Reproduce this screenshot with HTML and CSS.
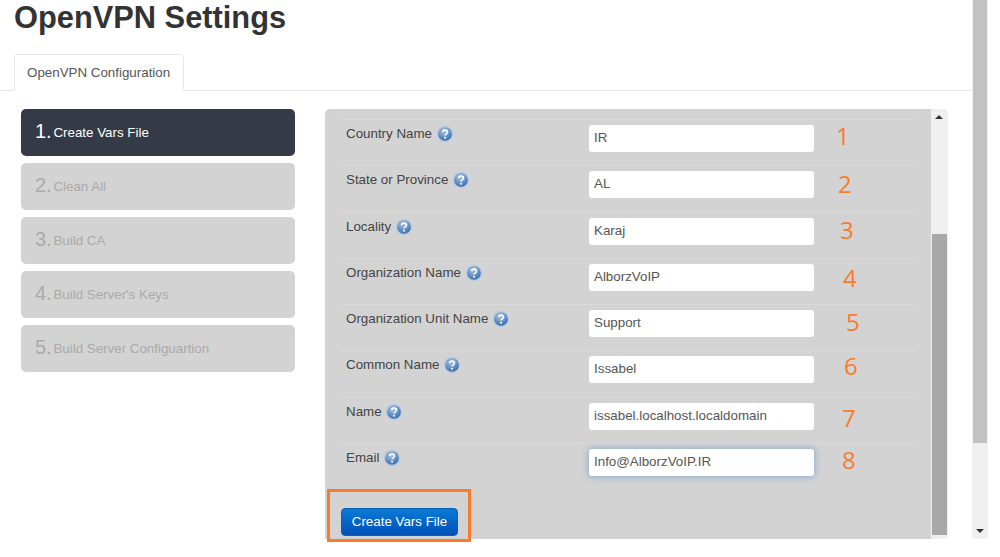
FILE: index.html
```html
<!DOCTYPE html>
<html lang="en">
<head>
    <title>OpenVPN Settings</title>
    <link rel="stylesheet" href="styles.css">
</head>
<body>
    <svg class="icon-defs" width="0" height="0">
        <defs>
            <radialGradient id="helpFill" cx="42%" cy="28%" r="80%">
                <stop offset="0" stop-color="#a9c4e2"/>
                <stop offset="0.55" stop-color="#6492c6"/>
                <stop offset="1" stop-color="#2a62a8"/>
            </radialGradient>
            <symbol id="help" viewBox="0 0 16 16">
                <circle cx="8" cy="8" r="8" fill="#b4c8dd"/>
                <circle cx="8" cy="8" r="6.8" fill="url(#helpFill)"/>
                <path d="M5.6 6.2c.2-1.4 1.2-2.1 2.5-2.1 1.4 0 2.4.8 2.4 2 0 1.8-2.4 1.8-2.4 3.5" fill="none" stroke="#fff" stroke-width="1.6"/>
                <circle cx="8.1" cy="11.8" r="1.05" fill="#fff"/>
            </symbol>
        </defs>
    </svg>

    <div class="page">
        <div class="main">
            <h1>OpenVPN Settings</h1>

            <div class="tabs">
                <div class="tab">OpenVPN Configuration</div>
            </div>

            <div class="content">
                <div class="steps">
                    <div class="step active"><span class="step-num">1.</span> Create Vars File</div>
                    <div class="step"><span class="step-num">2.</span> Clean All</div>
                    <div class="step"><span class="step-num">3.</span> Build CA</div>
                    <div class="step"><span class="step-num">4.</span> Build Server's Keys</div>
                    <div class="step"><span class="step-num">5.</span> Build Server Configuartion</div>
                </div>

                <div class="panel">
                    <div class="form">
                        <div class="row">
                            <div class="label">Country Name <svg class="help"><use href="#help"/></svg></div>
                            <div class="field">IR</div>
                            <span class="mark mark-1">1</span>
                        </div>
                        <div class="row">
                            <div class="label">State or Province <svg class="help"><use href="#help"/></svg></div>
                            <div class="field">AL</div>
                            <span class="mark mark-2">2</span>
                        </div>
                        <div class="row">
                            <div class="label">Locality <svg class="help"><use href="#help"/></svg></div>
                            <div class="field">Karaj</div>
                            <span class="mark mark-3">3</span>
                        </div>
                        <div class="row">
                            <div class="label">Organization Name <svg class="help"><use href="#help"/></svg></div>
                            <div class="field">AlborzVoIP</div>
                            <span class="mark mark-4">4</span>
                        </div>
                        <div class="row">
                            <div class="label">Organization Unit Name <svg class="help"><use href="#help"/></svg></div>
                            <div class="field">Support</div>
                            <span class="mark mark-5">5</span>
                        </div>
                        <div class="row">
                            <div class="label">Common Name <svg class="help"><use href="#help"/></svg></div>
                            <div class="field">Issabel</div>
                            <span class="mark mark-6">6</span>
                        </div>
                        <div class="row">
                            <div class="label">Name <svg class="help"><use href="#help"/></svg></div>
                            <div class="field">issabel.localhost.localdomain</div>
                            <span class="mark mark-7">7</span>
                        </div>
                        <div class="row">
                            <div class="label">Email <svg class="help"><use href="#help"/></svg></div>
                            <div class="field focused">Info@AlborzVoIP.IR</div>
                            <span class="mark mark-8">8</span>
                        </div>
                        <button class="create-btn">Create Vars File</button>
                        <div class="highlight"></div>
                    </div>
                    <div class="scrollbar inner-bar">
                        <span class="arrow-up"></span>
                        <div class="thumb inner-thumb"></div>
                    </div>
                </div>
            </div>
        </div>

        <div class="scrollbar page-bar">
            <div class="thumb page-thumb"></div>
            <span class="arrow-down"></span>
        </div>
    </div>
</body>
</html>
```

FILE: styles.css
```css
* {
    box-sizing: border-box;
}

html, body {
    min-height: 557px;
    background-color: white;
}

body {
    margin: 0;
    font-family: "Liberation Sans", Arial, sans-serif;
    font-size: 13.35px;
    color: #555;
}

.icon-defs {
    display: block;
    height: 0;
}

.page {
    display: flex;
    width: 988px;
    height: 539px;
}

.main {
    width: 972px;
    flex-shrink: 0;
}

h1 {
    margin: 0;
    padding: 0 0 0 14px;
    height: 54px;
    font-size: 30.8px;
    line-height: 36px;
    font-weight: bold;
    color: #333;
}

.tabs {
    height: 37px;
    padding-left: 14px;
    border-bottom: 1px solid #e8e8e8;
}

.tab {
    width: 170px;
    height: 37px;
    padding: 0 12px;
    line-height: 35px;
    white-space: nowrap;
    background: white;
    border: 1px solid #e8e8e8;
    border-bottom: 1px solid white;
    border-radius: 4px 4px 0 0;
}

.content {
    display: flex;
    padding: 18px 0 0 21px;
}

.steps {
    display: flex;
    flex-direction: column;
    gap: 7px;
    width: 274px;
    margin-right: 30px;
}

.step {
    height: 47px;
    padding-left: 14px;
    line-height: 45px;
    background-color: #d3d3d3;
    border-radius: 5px;
    color: #aaa;
}

.step.active {
    background-color: #343a46;
    color: white;
}

.step-num {
    margin-right: -2px;
    font-size: 20px;
    vertical-align: -1px;
}

.panel {
    display: flex;
    width: 623px;
    height: 430px;
}

.form {
    position: relative;
    width: 606px;
    padding: 10px 16px 0;
    background-color: #d3d3d3;
    border-radius: 5px 0 0 0;
}

.row {
    position: relative;
    display: flex;
    height: 46.3px;
    border-top: 1px solid #dadada;
}

.label {
    width: 248px;
    padding: 5px 0 0 5px;
    line-height: 18px;
    color: #444;
}

.help {
    width: 16px;
    height: 16px;
    margin-left: 1px;
    vertical-align: -4px;
}

.field {
    width: 225px;
    height: 27px;
    margin-top: 5px;
    padding-left: 5px;
    line-height: 26px;
    background: white;
    border-radius: 3px;
}

.field.focused {
    box-shadow: 0 0 6px 1px rgba(90, 150, 210, 0.6);
}

.mark {
    position: absolute;
    font-family: "Open Sans", sans-serif;
    font-size: 24px;
    line-height: 30px;
    color: #f97b2b;
}

.mark-1 { left: 495px; top: 1px; }
.mark-2 { left: 497px; top: 3px; }
.mark-3 { left: 499px; top: 2px; }
.mark-4 { left: 502px; top: 4px; }
.mark-5 { left: 505px; top: 2px; }
.mark-6 { left: 503px; top: 0; }
.mark-7 { left: 501px; top: 5px; }
.mark-8 { left: 501px; top: 1px; }

.create-btn {
    display: block;
    width: 117px;
    height: 28px;
    margin-top: 19px;
    padding: 0 0 2px;
    border: 1px solid #0a5fb4;
    border-radius: 4px;
    background: linear-gradient(#0a7ad6, #0050b8);
    color: white;
    font-family: inherit;
    font-size: 13.35px;
}

.highlight {
    position: absolute;
    left: 2px;
    top: 380px;
    width: 144px;
    height: 53px;
    border: 3px solid #f97b2b;
}

.scrollbar {
    position: relative;
    width: 17px;
    height: 100%;
    background-color: #f0f0f0;
}

.inner-bar {
    border-radius: 0 5px 0 0;
}

.thumb {
    position: absolute;
    left: 1px;
    width: 15px;
}

.inner-thumb {
    top: 125px;
    height: 301px;
    background-color: #a8a8a8;
}

.page-thumb {
    top: 0;
    width: 14px;
    height: 443px;
    background-color: #c2c2c2;
}

.arrow-up {
    position: absolute;
    left: 4px;
    top: 6px;
    border-left: 4px solid transparent;
    border-right: 4px solid transparent;
    border-bottom: 4px solid #333;
}

.page-bar {
    width: 16px;
}

.arrow-down {
    position: absolute;
    left: 4px;
    bottom: 6px;
    border-left: 4px solid transparent;
    border-right: 4px solid transparent;
    border-top: 4px solid #333;
}
```
